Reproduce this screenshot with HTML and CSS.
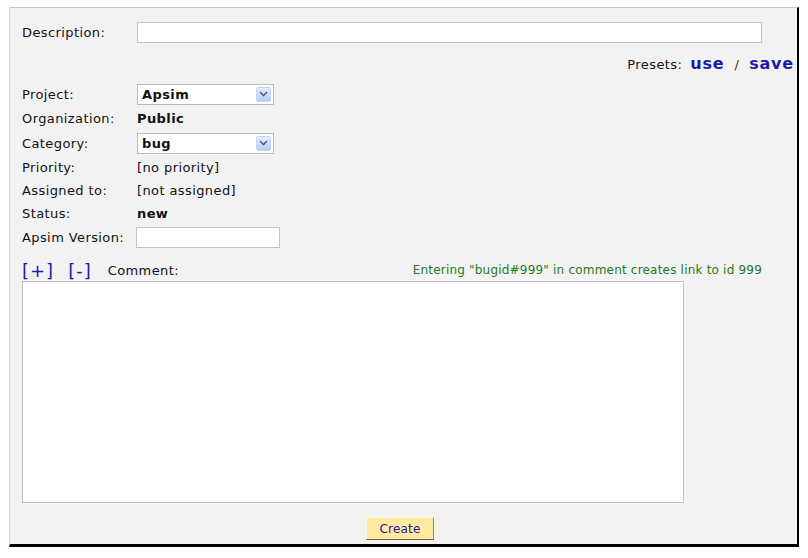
FILE: index.html
```html
<!DOCTYPE html>
<html>
<head>
<meta charset="utf-8">
<link rel="stylesheet" href="styles.css">
</head>
<body>
<div class="panel">
  <div class="desc-row">
    <span class="desc-label">Description:</span>
    <input class="desc-input" type="text">
  </div>
  <div class="presets-row">
    <span class="presets-label">Presets:</span>
    <a class="preset-link">use</a>
    <span class="slash">/</span>
    <a class="preset-link">save</a>
  </div>
  <div class="fields">
    <div class="row r-project">
      <span class="label">Project:</span>
      <div class="select"><span class="select-text">Apsim</span><span class="select-btn"><svg width="9" height="6" viewBox="0 0 9 6"><path d="M1 1 L4.5 4.5 L8 1" fill="none" stroke="#4d6185" stroke-width="1.6"/></svg></span></div>
    </div>
    <div class="row r-org">
      <span class="label">Organization:</span>
      <span class="value bold">Public</span>
    </div>
    <div class="row r-cat">
      <span class="label">Category:</span>
      <div class="select"><span class="select-text">bug</span><span class="select-btn"><svg width="9" height="6" viewBox="0 0 9 6"><path d="M1 1 L4.5 4.5 L8 1" fill="none" stroke="#4d6185" stroke-width="1.6"/></svg></span></div>
    </div>
    <div class="row r-pri">
      <span class="label">Priority:</span>
      <span class="value">[no priority]</span>
    </div>
    <div class="row r-asg">
      <span class="label">Assigned to:</span>
      <span class="value">[not assigned]</span>
    </div>
    <div class="row r-status">
      <span class="label">Status:</span>
      <span class="value bold">new</span>
    </div>
    <div class="row r-ver">
      <span class="label">Apsim Version:</span>
      <input class="ver-input" type="text">
    </div>
  </div>
  <div class="comment-row">
    <a class="toggle">[+]</a>
    <a class="toggle minus">[-]</a>
    <span class="comment-label">Comment:</span>
    <span class="hint">Entering "bugid#999" in comment creates link to id 999</span>
  </div>
  <textarea class="comment"></textarea>
  <div class="btn-row">
    <button class="create">Create</button>
  </div>
</div>
</body>
</html>
```
FILE: styles.css
```css
html, body {
  margin: 0;
  padding: 0;
  background: #ffffff;
}
body {
  font-family: "DejaVu Sans", Verdana, sans-serif;
  font-size: 13px;
  letter-spacing: 0.4px;
  color: #111;
}
.panel {
  margin: 7px 0 0 9px;
  width: 790px;
  height: 540px;
  box-sizing: border-box;
  background: #f2f2f2;
  border-top: 1px solid #c8c8c8;
  border-left: 1px solid #d8d8d8;
  border-right: 2px solid #000;
  border-bottom: 3px solid #000;
  position: relative;
}
.desc-row {
  display: flex;
  align-items: center;
  margin-top: 14px;
  height: 21px;
  padding-left: 12px;
}
.desc-label {
  width: 115px;
}
.desc-input {
  width: 625px;
  height: 21px;
  box-sizing: border-box;
  border: 1px solid #c4c4c4;
  background: #fff;
  margin: 0;
  padding: 0 2px;
}
.presets-row {
  display: flex;
  justify-content: flex-end;
  align-items: baseline;
  margin-top: 11px;
  height: 20px;
  padding-right: 3px;
}
.presets-label {
  margin-right: 8px;
}
.preset-link {
  color: #1a1aa8;
  font-weight: bold;
  font-size: 16px;
  letter-spacing: 0.8px;
}
.slash {
  color: #333;
  font-size: 13px;
  margin: 0 10px 0 10px;
}
.fields {
  margin-top: 8px;
  padding-left: 12px;
}
.row {
  display: flex;
  align-items: center;
}
.r-project { height: 24px; }
.r-org { height: 24px; }
.r-cat { height: 26px; }
.r-pri { height: 23px; }
.r-asg { height: 22px; }
.r-status { height: 24px; }
.r-ver { height: 24px; }
.label {
  width: 115px;
  flex: none;
}
.value.bold {
  font-weight: bold;
}
.select {
  width: 137px;
  height: 21px;
  box-sizing: border-box;
  border: 1px solid #b6bcc4;
  background: #fff;
  display: flex;
  align-items: center;
  justify-content: space-between;
}
.select-text {
  font-weight: bold;
  padding-left: 4px;
}
.select-btn {
  width: 15px;
  height: 15px;
  margin-right: 2px;
  box-sizing: border-box;
  border: 1px solid #c3d3f5;
  border-radius: 2px;
  background: linear-gradient(#e4ecfd, #bccdf2);
  display: flex;
  align-items: center;
  justify-content: center;
}
.ver-input {
  width: 144px;
  height: 21px;
  box-sizing: border-box;
  border: 1px solid #c4c4c4;
  background: #fff;
  margin: 0 0 0 -1px;
  padding: 0;
}
.comment-row {
  display: flex;
  align-items: center;
  height: 22px;
  margin-top: 10px;
  padding-left: 12px;
  padding-right: 35px;
}
.toggle {
  color: #1a1aa8;
  font-size: 18px;
  letter-spacing: 1px;
  margin-right: 14px;
}
.toggle.minus {
  margin-right: 16px;
}
.comment-label {
  flex: 1;
}
.hint {
  color: #227a22;
  font-size: 12px;
  letter-spacing: 0.2px;
}
.comment {
  display: block;
  margin: 0 0 0 12px;
  width: 662px;
  height: 222px;
  box-sizing: border-box;
  border: 1px solid #c4c4c4;
  background: #fff;
  resize: none;
  padding: 0;
}
.btn-row {
  display: flex;
  justify-content: center;
  margin-top: 14px;
}
.create {
  margin-right: 7px;
  width: 68px;
  height: 23px;
  background: #feeaa0;
  border: 1px solid;
  border-color: #fff8d8 #9a8a5a #6e6040 #fff8d8;
  color: #281c8c;
  font-family: "DejaVu Sans", Verdana, sans-serif;
  font-size: 12px;
  letter-spacing: 0.2px;
  padding: 0;
}
```
